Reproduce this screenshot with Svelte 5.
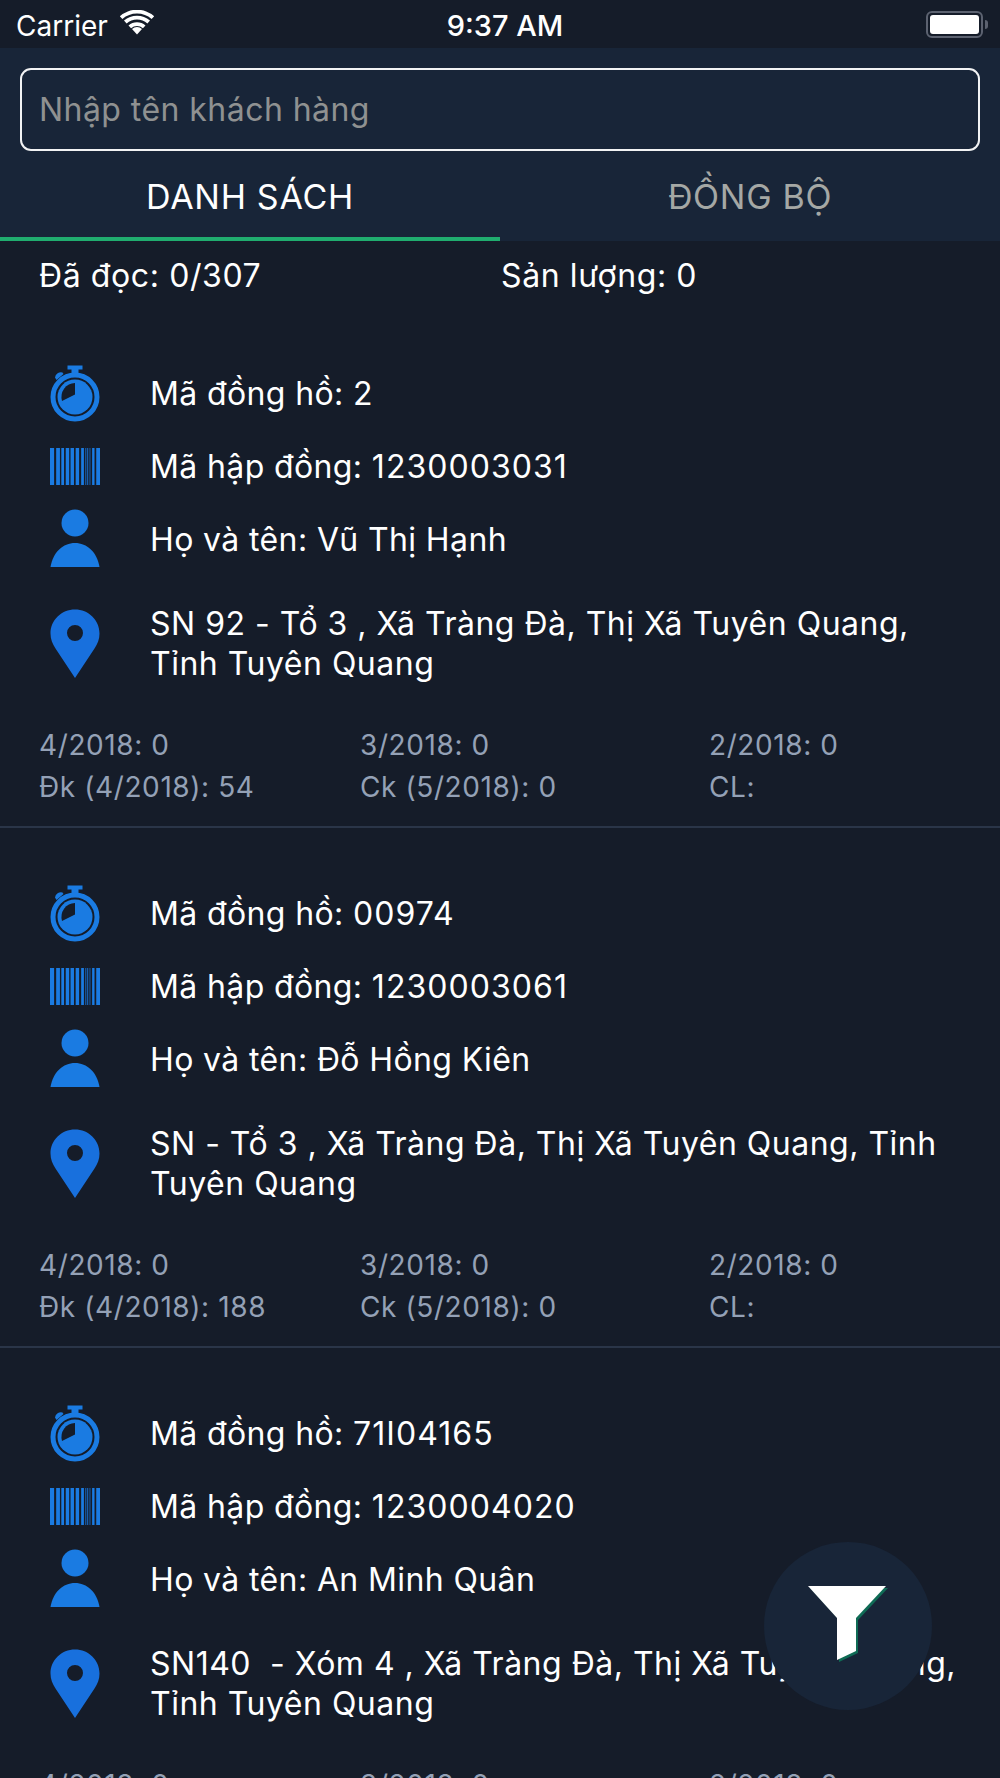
<script>
  const cards = [
    { meter: '2', contract: '1230003031', name: 'Vũ Thị Hạnh', address: 'SN 92 - Tổ 3 , Xã Tràng Đà, Thị Xã Tuyên Quang, Tỉnh Tuyên Quang', dk: '54' },
    { meter: '00974', contract: '1230003061', name: 'Đỗ Hồng Kiên', address: 'SN - Tổ 3 , Xã Tràng Đà, Thị Xã Tuyên Quang, Tỉnh Tuyên Quang', dk: '188' },
    { meter: '71I04165', contract: '1230004020', name: 'An Minh Quân', address: 'SN140  - Xóm 4 , Xã Tràng Đà, Thị Xã Tuyên Quang, Tỉnh Tuyên Quang', dk: '' }
  ];
  const bars = [[0,12,1],[18,11,1],[33,8,1],[46,10,1],[60,10,1],[75,10,1],[91,8,1],[103,3,.8],[108,3,.7],[113,2,.6],[116,2,.8],[123,7,1],[135,11,1]];
</script>

<div class="screen">
  <div class="status">
    <div class="left">
      <span>Carrier</span>
      <svg class="wifi" viewBox="0 0 36 26" width="36" height="26">
        <path d="M18 24.500 13 19a7.500 7.500 0 0 1 10 0Z" fill="#fff"/>
        <path d="M9.500 15.400a13 13 0 0 1 17 0l-2.600 2.800a9.200 9.200 0 0 0-11.800 0Z" fill="#fff"/>
        <path d="M5 10.600a20 20 0 0 1 26 0l-2.600 2.800a16 16 0 0 0-20.800 0Z" fill="#fff"/>
        <path d="M.8 6.200a26 26 0 0 1 34.400 0l-2.600 2.800a22 22 0 0 0-29.200 0Z" fill="#fff"/>
      </svg>
    </div>
    <span class="time">9:37 AM</span>
    <div class="battery"><div class="cell"><div class="charge"></div></div><div class="nub"></div></div>
  </div>

  <div class="header">
    <div class="search">Nhập tên khách hàng</div>
    <div class="tabs">
      <div class="tab active">DANH SÁCH</div>
      <div class="tab">ĐỒNG BỘ</div>
    </div>
  </div>

  <div class="stats">
    <span class="read">Đã đọc: 0/307</span>
    <span>Sản lượng: 0</span>
  </div>

  {#each cards as c}
    <div class="card">
      <div class="row">
        <svg class="icon" viewBox="0 0 50 58" width="50" height="58">
          <path d="M17.500 0.500h15v4h-4v5h-7v-5h-4Z" fill="#1a7be2"/>
          <path d="M5 12.500a6 6 0 0 1 7.500-5l1 1.500-7 6Z" fill="#1a7be2"/>
          <circle cx="25" cy="32" r="22" fill="none" stroke="#1a7be2" stroke-width="5"/>
          <circle cx="25" cy="32" r="17.500" fill="#1a7be2"/>
          <path d="M25 29.500V18A14 14 0 0 0 12 36Z" fill="#151c29"/>
        </svg>
        <span class="line">Mã đồng hồ: <span class="num">{c.meter}</span></span>
      </div>
      <div class="row">
        <svg class="icon" viewBox="0 0 146 37" width="50" height="37" preserveAspectRatio="none">
          {#each bars as b}<rect x={b[0]} y="0" width={b[1]} height="37" fill="#1a7be2" opacity={b[2]}/>{/each}
        </svg>
        <span class="line">Mã hập đồng: <span class="num">{c.contract}</span></span>
      </div>
      <div class="row">
        <svg class="icon person" viewBox="0 0 50 58" width="50" height="58">
          <circle cx="25" cy="14" r="13.500" fill="#1a7be2"/>
          <path d="M.5 58C3 43 13 34 25 34s22 9 24.500 24Z" fill="#1a7be2"/>
        </svg>
        <span class="line">Họ và tên: {c.name}</span>
      </div>
      <div class="row address">
        <svg class="icon" viewBox="0 0 50 70" width="50" height="70">
          <path fill-rule="evenodd" d="M25 .5C11.500.5.5 11 .5 24.500c0 6 2 10.500 5 15L25 69l19.500-29.500c3-4.500 5-9 5-15C49.500 11 38.500.5 25 .5Zm0 15.500a8 8 0 1 1 0 16 8 8 0 0 1 0-16Z" fill="#1870dd"/>
        </svg>
        <span class="line addr">{c.address}</span>
      </div>
      <div class="meta">
        <span>4/2018: 0</span><span>3/2018: 0</span><span>2/2018: 0</span>
        <span>Đk (4/2018): {c.dk}</span><span>Ck (5/2018): 0</span><span>CL:</span>
      </div>
    </div>
  {/each}

  <div class="fab">
    <svg viewBox="0 0 84 80" width="84" height="80">
      <path d="M1 1H79L49 33V66L30 75V33Z" fill="#0f6b55" transform="translate(2 2)"/>
      <path d="M1 1H79L49 33V66L30 75V33Z" fill="#fff"/>
    </svg>
  </div>
</div>

<style>
  :global(body) { margin: 0; background: #151c29; }
  .screen {
    position: relative;
    width: 1000px;
    height: 1778px;
    overflow: hidden;
    background: #151c29;
    color: #fff;
    font-family: Inter, "Noto Sans", sans-serif;
    font-size: 32px;
    letter-spacing: 0.6px;
  }
  .status {
    height: 48px;
    display: grid;
    grid-template-columns: 1fr auto 1fr;
    align-items: center;
    padding: 3px 12px 0 16px;
    box-sizing: border-box;
    font-size: 28px;
    letter-spacing: 0;
  }
  .left { display: flex; align-items: center; gap: 11px; }
  .wifi { margin-top: -5px; }
  .time { font-weight: 500; font-size: 29px; margin-left: 6px; }
  .battery { display: flex; align-items: center; justify-content: flex-end; margin-top: -3px; }
  .cell { width: 57px; height: 27px; box-sizing: border-box; border: 2px solid #5c6270; border-radius: 6px; padding: 2px; }
  .charge { height: 100%; background: #fff; border-radius: 3px; }
  .nub { width: 3px; height: 9px; background: #5c6270; border-radius: 0 3px 3px 0; margin-left: 2px; }
  .header { height: 193px; background: #182538; padding-top: 20px; box-sizing: border-box; display: flex; flex-direction: column; }
  .search {
    margin: 0 20px;
    height: 83px;
    box-sizing: border-box;
    border: 2px solid #f2f3f4;
    border-radius: 11px;
    display: flex;
    align-items: center;
    padding-left: 17px;
    color: #8f9191;
    letter-spacing: 0.45px;
  }
  .tabs { flex: 1; display: flex; }
  .tab {
    flex: 1;
    display: flex;
    align-items: center;
    justify-content: center;
    color: #a5a8a5;
    box-sizing: border-box;
    padding-top: 4px;
    border-bottom: 4px solid transparent;
    font-size: 34px;
    letter-spacing: 0.7px;
  }
  .tab.active { color: #fff; border-bottom-color: #20ad6f; }
  .stats { height: 67px; display: flex; padding-left: 39px; box-sizing: border-box; line-height: 70px; }
  .read { width: 462px; }
  .card { height: 520px; box-sizing: border-box; padding-top: 49px; border-bottom: 2px solid #2a3548; }
  .row { height: 73px; display: flex; align-items: center; padding-left: 50px; }
  .icon { flex: none; margin-right: 50px; }
  .line { letter-spacing: 0.38px; }
  .num { letter-spacing: 1.05px; }
  .addr { letter-spacing: 0.5px; }
  .person { margin-top: -3px; }
  .address { height: 80px; margin-top: 28px; line-height: 40px; padding-right: 30px; white-space: pre-wrap; }
  .meta {
    margin: 40px 0 0 39px;
    display: grid;
    grid-template-columns: 321px 349px 1fr;
    grid-auto-rows: 42px;
    align-items: center;
    color: #94a1b6;
    font-size: 28px;
  }
  .fab {
    position: absolute;
    left: 764px;
    top: 1542px;
    width: 168px;
    height: 168px;
    border-radius: 50%;
    background: #182538;
  }
  .fab svg { position: absolute; left: 43px; top: 43px; }
</style>
